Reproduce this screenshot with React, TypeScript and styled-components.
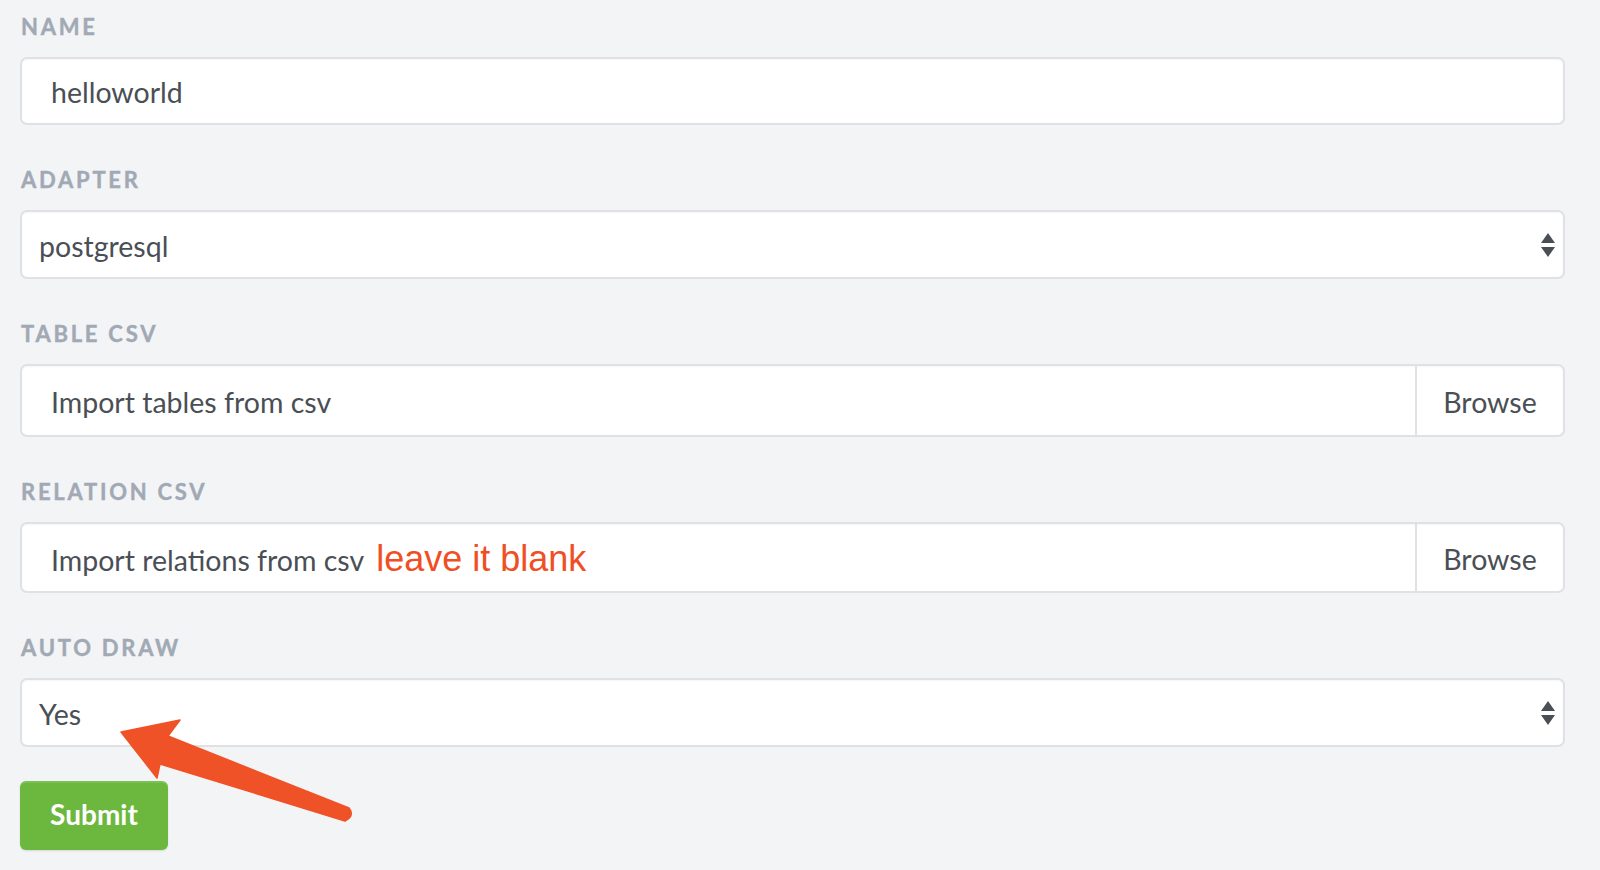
import React from "react";
import styled, { createGlobalStyle } from "styled-components";

const GlobalStyle = createGlobalStyle`
  html, body {
    margin: 0;
    padding: 0;
    background: #f3f4f6;
  }
  body {
    font-family: Lato, "Open Sans", sans-serif;
    color: #4a4f55;
  }
`;

const Page = styled.div`
  position: relative;
  width: 1600px;
  height: 870px;
  box-sizing: border-box;
  padding: 12px 35px 0 20px;
  background: #f3f4f6;
  overflow: hidden;
`;

const Form = styled.form`
  display: flex;
  flex-direction: column;
  gap: 40px;
`;

const Group = styled.div`
  display: flex;
  flex-direction: column;
`;

const Label = styled.label`
  display: block;
  height: 30px;
  line-height: 30px;
  margin: 0 0 15px 1px;
  font-family: Lato, sans-serif;
  font-weight: 700;
  font-size: 22px;
  letter-spacing: 0.125em;
  color: #a1a9b4;
  text-transform: uppercase;
  -webkit-text-stroke: 0.4px #a1a9b4;
`;

const Box = styled.div<{ $h: number }>`
  position: relative;
  display: flex;
  align-items: center;
  height: ${(p) => p.$h}px;
  box-sizing: border-box;
  background: #fff;
  border: 2px solid #dfe1e5;
  border-radius: 7px;
  box-shadow: inset 0 1px 2px rgba(0, 0, 0, 0.04);
  overflow: hidden;
`;

const Value = styled.span<{ $pad: number }>`
  flex: 1;
  padding-left: ${(p) => p.$pad}px;
  padding-top: 2px;
  font-size: 28.5px;
  color: #4a4f55;
  white-space: nowrap;
`;

const Note = styled.span`
  margin-left: 12px;
  font-family: "Liberation Sans", Arial, sans-serif;
  font-size: 36px;
  color: #f04e23;
`;

const Arrows = styled.span`
  display: flex;
  flex-direction: column;
  gap: 4px;
  margin-right: 8px;
`;

const Tri = styled.span<{ $up?: boolean }>`
  width: 0;
  height: 0;
  border-left: 7px solid transparent;
  border-right: 7px solid transparent;
  ${(p) =>
    p.$up
      ? "border-bottom: 10px solid #4a4f55;"
      : "border-top: 10px solid #4a4f55;"}
`;

const BrowseBtn = styled.span`
  display: flex;
  align-items: center;
  justify-content: center;
  width: 148px;
  height: 100%;
  padding-top: 2px;
  box-sizing: border-box;
  border-left: 2px solid #dfe1e5;
  font-size: 28.5px;
  color: #4a4f55;
`;

const Submit = styled.button`
  align-self: flex-start;
  margin-top: -6px;
  width: 148px;
  height: 69px;
  padding: 0 0 3px;
  border: none;
  border-radius: 6px;
  background: #6cb83e;
  box-shadow: inset 0 2px 0 rgba(255, 255, 255, 0.12), 0 1px 2px rgba(0, 0, 0, 0.12);
  color: #fff;
  font-family: Lato, sans-serif;
  font-weight: 700;
  font-size: 28px;
  cursor: pointer;
`;

const Overlay = styled.svg`
  position: absolute;
  left: 0;
  top: 0;
  pointer-events: none;
`;

const SelectArrows = () => (
  <Arrows>
    <Tri $up />
    <Tri />
  </Arrows>
);

export default function App() {
  return (
    <>
      <GlobalStyle />
      <Page>
        <Form onSubmit={(e) => e.preventDefault()}>
          <Group>
            <Label>Name</Label>
            <Box $h={68}>
              <Value $pad={29}>helloworld</Value>
            </Box>
          </Group>
          <Group>
            <Label>Adapter</Label>
            <Box $h={69}>
              <Value $pad={17}>postgresql</Value>
              <SelectArrows />
            </Box>
          </Group>
          <Group>
            <Label>Table CSV</Label>
            <Box $h={73}>
              <Value $pad={29}>Import tables from csv</Value>
              <BrowseBtn>Browse</BrowseBtn>
            </Box>
          </Group>
          <Group>
            <Label>Relation CSV</Label>
            <Box $h={71}>
              <Value $pad={29}>
                Import relations from csv<Note>leave it blank</Note>
              </Value>
              <BrowseBtn>Browse</BrowseBtn>
            </Box>
          </Group>
          <Group>
            <Label>Auto Draw</Label>
            <Box $h={69}>
              <Value $pad={17}>Yes</Value>
              <SelectArrows />
            </Box>
          </Group>
          <Submit type="submit">Submit</Submit>
        </Form>
        <Overlay width="1600" height="870" viewBox="0 0 1600 870">
          <path
            d="M121,732 L180,720 L168,736 L349,808 Q355,816 345,821 L160,764 L157,778 Z"
            fill="#ef5226"
            stroke="#ef5226"
            strokeWidth="1.5"
            strokeLinejoin="round"
          />
        </Overlay>
      </Page>
    </>
  );
}
